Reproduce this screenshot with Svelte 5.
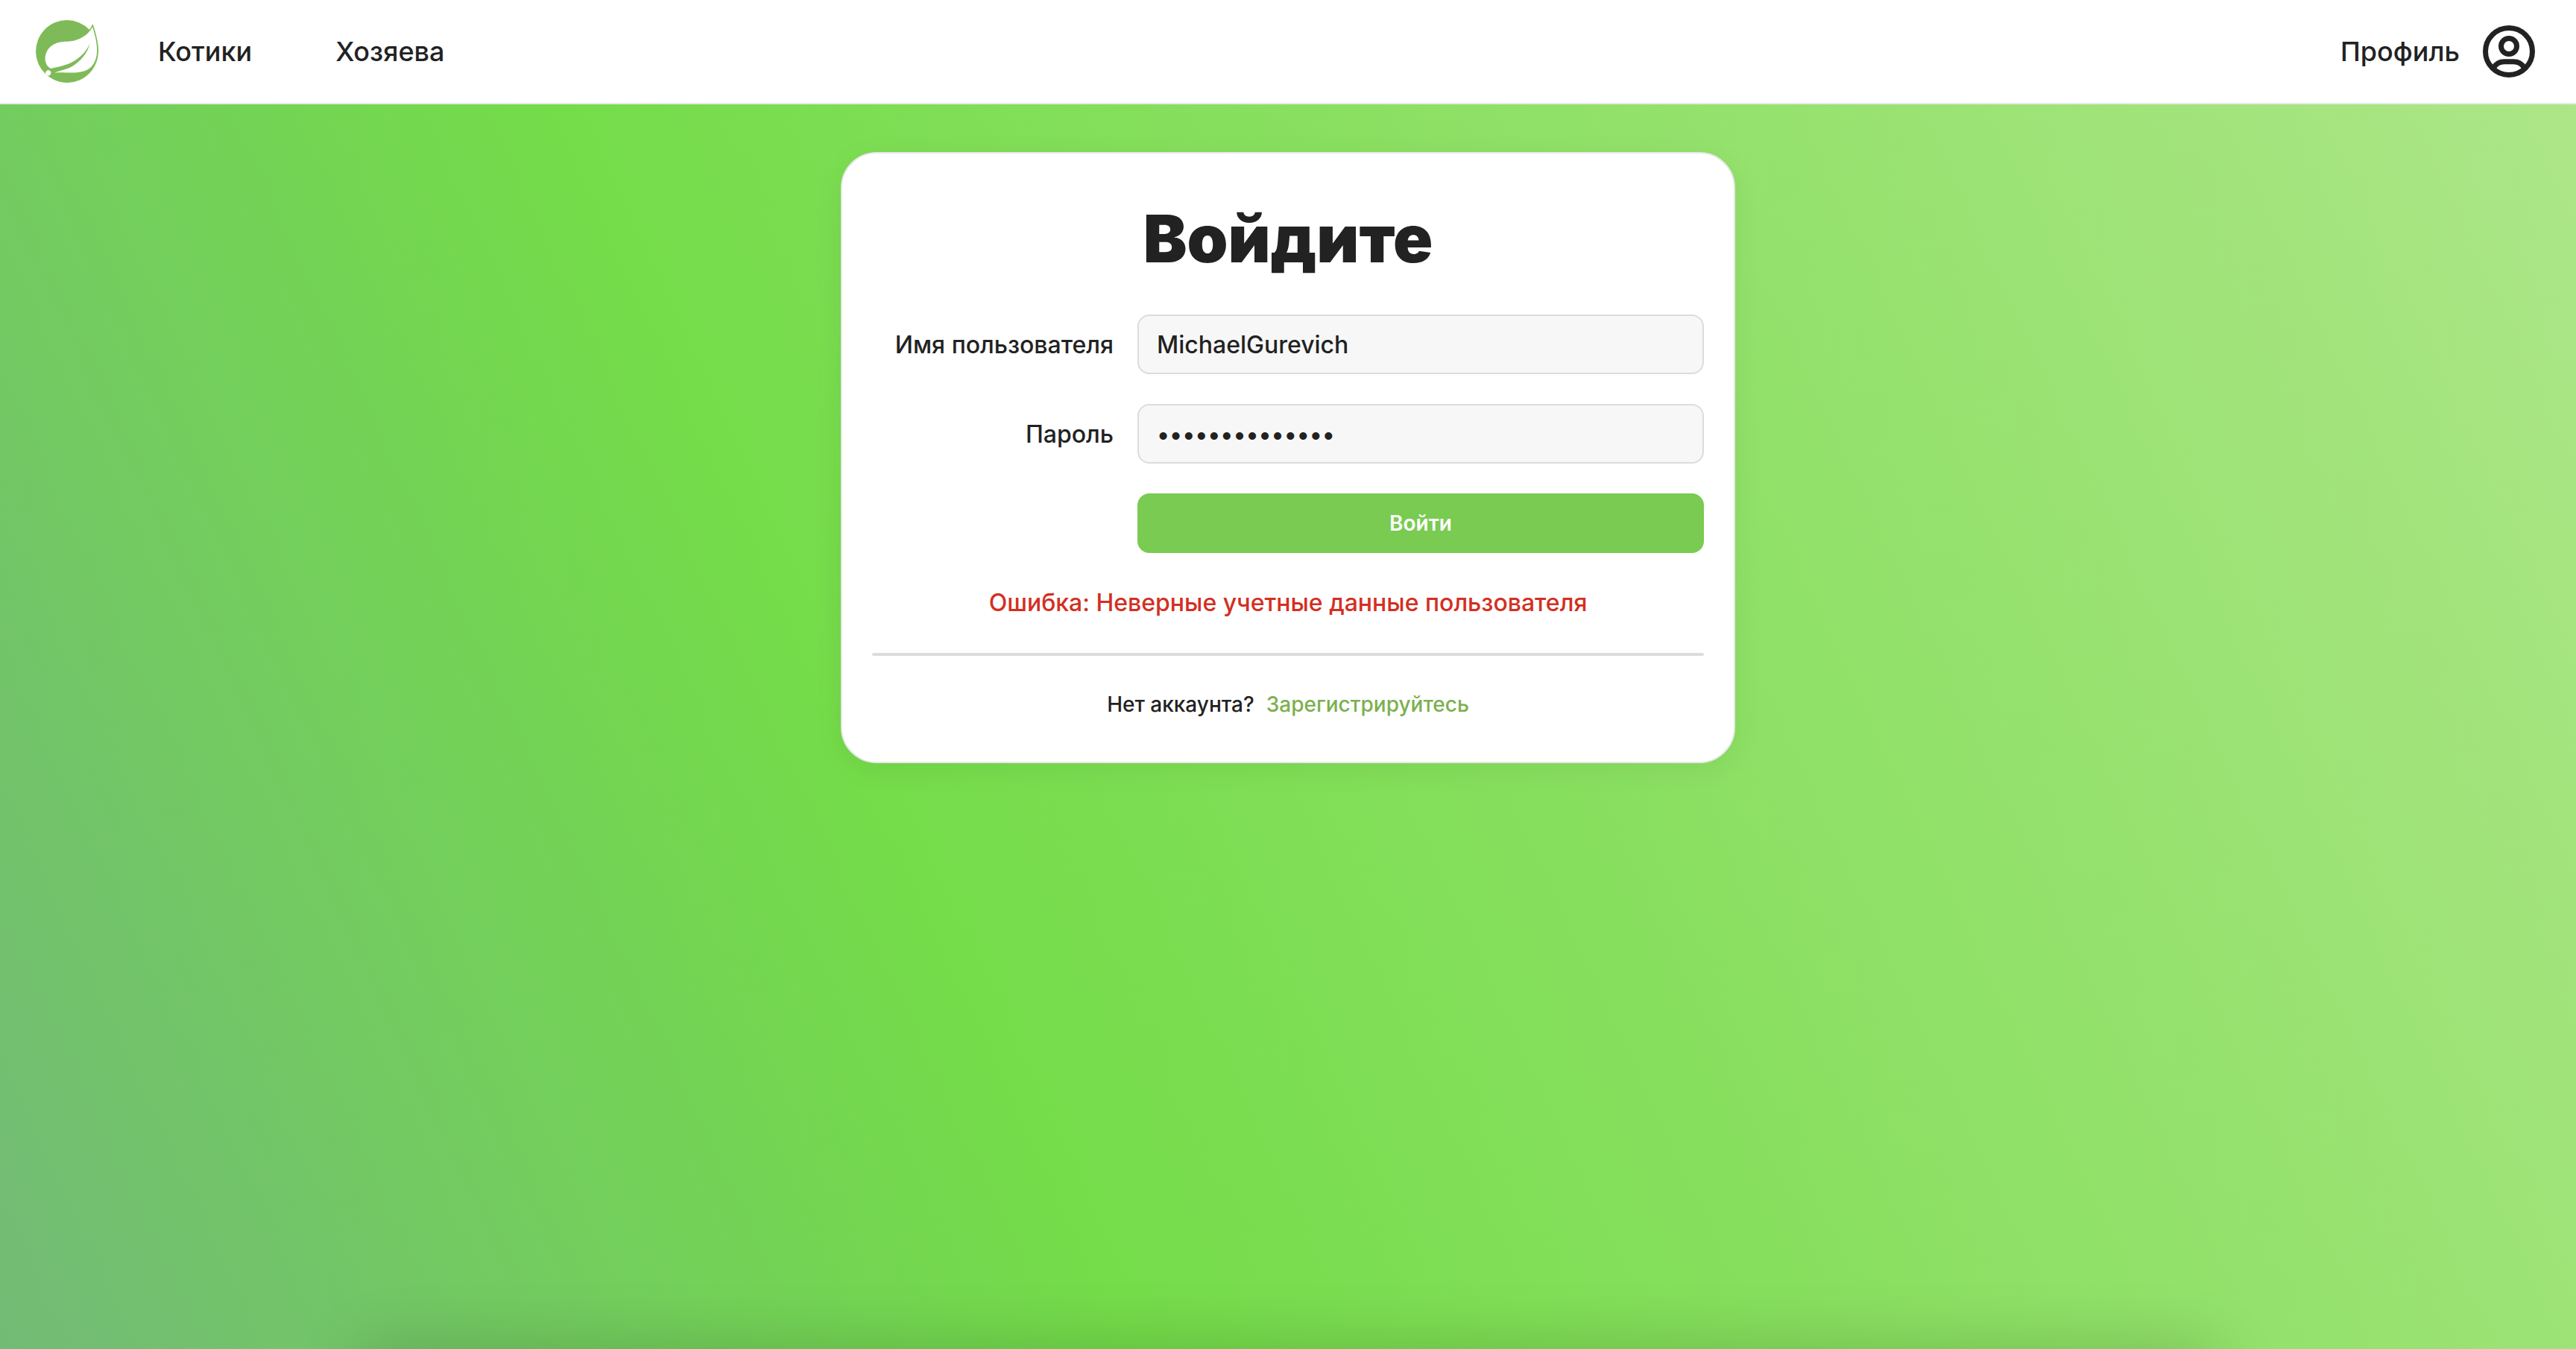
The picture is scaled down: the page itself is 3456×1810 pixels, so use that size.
<script>
  let username = $state('MichaelGurevich');
  let password = $state('springpetclini');

  const links = [
    { href: '#cats', label: 'Котики' },
    { href: '#owners', label: 'Хозяева' }
  ];

  function submit(event) {
    event.preventDefault();
  }
</script>

<div class="page">
  <header class="topbar">
    <nav class="nav">
      <a class="logo" href="#home" aria-label="Spring">
        <svg viewBox="0 0 24 24" aria-hidden="true">
          <path
            d="M21.8537 1.4158a10.4504 10.4504 0 0 1-1.284 2.2471A11.9666 11.9666 0 1 0 3.8518 20.7757l.4445.3951a11.9543 11.9543 0 0 0 19.6316-8.2971c.3457-3.0126-.568-6.8649-2.0742-11.458zM5.5805 20.8745a1.0174 1.0174 0 1 1-.1482-1.4323 1.0396 1.0396 0 0 1 .1482 1.4323zm16.1991-3.5806c-2.9385 3.9263-9.2601 2.5928-13.2852 2.7904 0 0-.7161.0494-1.4323.1481 0 0 .2717-.1234.6174-.2469 2.8398-.9877 4.1732-1.1853 5.9018-2.0743 3.2349-1.6545 6.4698-5.2844 7.1118-9.0379-1.2347 3.6053-4.9881 6.7167-8.3959 7.9761-2.3459.8643-6.5685 1.7039-6.5685 1.7039l-.1729-.0988c-2.8645-1.4076-2.9632-7.6304 2.2718-9.6306 2.2966-.889 4.4696-.395 6.9637-.9877 2.6422-.6174 5.7043-2.5929 6.9389-5.1855 1.3828 4.1732 3.062 10.643.0493 14.6434z"
          />
        </svg>
      </a>
      {#each links as link}
        <a class="nav-link" href={link.href}>{link.label}</a>
      {/each}
    </nav>
    <a class="profile" href="#profile">
      <span>Профиль</span>
      <svg viewBox="0 0 24 24" aria-hidden="true">
        <circle cx="12" cy="12" r="9" />
        <circle cx="12" cy="10" r="3" />
        <path d="M6.2 18.2C7.1 16.6 8.5 15.9 10.2 15.9h3.6c1.7 0 3.1.7 4 2.3" />
      </svg>
    </a>
  </header>

  <main class="content">
    <section class="card">
      <h1>Войдите</h1>
      <form class="form" onsubmit={submit}>
        <label for="username">Имя пользователя</label>
        <input id="username" type="text" autocomplete="off" bind:value={username} />
        <label for="password">Пароль</label>
        <input id="password" type="password" autocomplete="off" bind:value={password} />
        <button type="submit">Войти</button>
      </form>
      <p class="error" role="alert">Ошибка: Неверные учетные данные пользователя</p>
      <hr />
      <p class="signup">
        <span>Нет аккаунта?</span>
        <a href="#register">Зарегистрируйтесь</a>
      </p>
    </section>
  </main>
</div>

<style>
  :global(body) {
    margin: 0;
  }

  .page {
    position: relative;
    display: flex;
    flex-direction: column;
    min-height: 100vh;
    overflow: hidden;
    color: #222;
    font-family: Inter, 'Liberation Sans', sans-serif;
    font-size: 32px;
    font-weight: 500;
    background: linear-gradient(65deg, #72bb76 0%, #74dc49 35%, #aee689 100%);
  }

  /* soft shade along the lower edge of the window */
  .page::after {
    content: '';
    position: absolute;
    top: 100%;
    left: 14%;
    right: 14%;
    height: 80px;
    box-shadow: 0 0 88px rgba(0, 0, 0, 0.18);
    pointer-events: none;
  }

  .topbar {
    display: flex;
    align-items: center;
    justify-content: space-between;
    height: 138px;
    padding: 0 48px;
    background: #fff;
    border-bottom: 2px solid #e8e8e8;
    font-size: 36px;
  }

  .nav {
    display: flex;
    align-items: center;
    gap: 112px;
  }

  .logo {
    display: flex;
    margin-right: -32px;
  }

  .logo svg {
    width: 84px;
    height: 84px;
    fill: #7ebb58;
  }

  .nav-link,
  .profile {
    color: inherit;
    text-decoration: none;
  }

  .profile {
    display: flex;
    align-items: center;
    gap: 24px;
  }

  .profile svg {
    width: 84px;
    height: 84px;
    fill: none;
    stroke: #222;
    stroke-width: 2;
  }

  .content {
    display: flex;
    justify-content: center;
    padding: 64px;
  }

  .card {
    box-sizing: border-box;
    width: 100%;
    max-width: 1200px;
    display: flex;
    flex-direction: column;
    padding: 40px 40px 52px;
    background: #fff;
    border: 2px solid #e8e8e8;
    border-radius: 48px;
    box-shadow: 0 8px 40px rgba(0, 0, 0, 0.06);
  }

  h1 {
    margin: 0 0 28px;
    font-size: 88px;
    font-weight: 900;
    line-height: 148px;
    text-align: center;
  }

  .form {
    display: grid;
    grid-template-columns: 324px 1fr;
    gap: 40px 32px;
    align-items: center;
  }

  label {
    text-align: right;
  }

  input,
  button {
    box-sizing: border-box;
    width: 100%;
    height: 80px;
    margin: 0;
    border-radius: 16px;
    font-family: inherit;
    font-weight: inherit;
  }

  input {
    padding: 0 24px;
    color: #222;
    background: #f7f7f7;
    border: 2px solid #dcdcdc;
    font-size: 32px;
    outline: none;
  }

  button {
    grid-column: 2;
    color: #fff;
    background: #79cb51;
    border: 0;
    font-size: 28px;
    font-weight: 600;
    cursor: pointer;
  }

  .error {
    margin: 40px 0;
    color: #d32f22;
    line-height: 54px;
    text-align: center;
  }

  hr {
    width: 100%;
    height: 4px;
    margin: 0;
    background: #dcdcdc;
    border: 0;
    border-radius: 2px;
  }

  .signup {
    display: flex;
    justify-content: center;
    gap: 16px;
    margin: 40px 0 0;
    font-size: 28px;
    line-height: 50px;
  }

  .signup a {
    color: #7cb04f;
    text-decoration: none;
  }
</style>
